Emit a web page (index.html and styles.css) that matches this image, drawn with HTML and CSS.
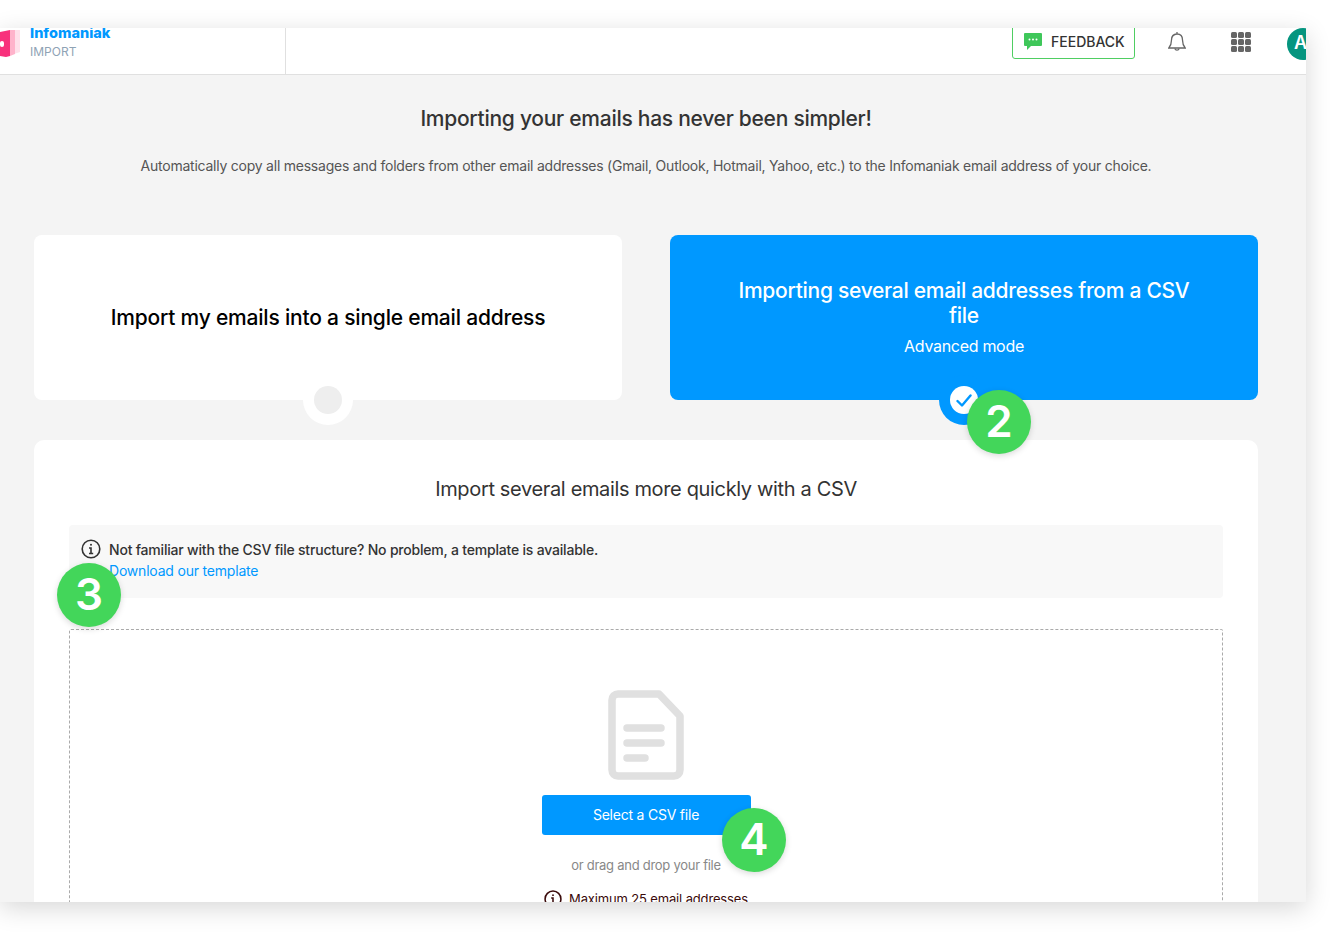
FILE: index.html
```html
<!DOCTYPE html>
<html lang="en">
<head>
    <meta charset="UTF-8">
    <meta name="viewport" content="width=device-width, initial-scale=1.0">
    <title>Import</title>
    <link rel="stylesheet" href="styles.css">
</head>
<body>

    <div class="frame">
        <header class="topbar">
            <div class="brand">
                <svg class="brand-logo" width="20" height="30" viewBox="0 0 20 30">
                    <path d="M0 1h20v22l-6 2V1z" fill="#ffe0ea"/>
                    <path d="M0 1h15v24l-5 2V1z" fill="#ffb3cb"/>
                    <path d="M0 3l10-2v26l-4 1-6-1z" fill="#f8317c"/>
                    <rect x="0" y="12" width="4" height="6" rx="2" fill="#fff"/>
                </svg>
                <div class="brand-text">
                    <div class="brand-name">Infomaniak</div>
                    <div class="brand-sub">IMPORT</div>
                </div>
            </div>
            <div class="topbar-right">
                <button class="feedback">
                    <svg width="18" height="17" viewBox="0 0 18 17">
                        <path d="M1 0h16a1 1 0 0 1 1 1v11a1 1 0 0 1-1 1H7l-4 4v-4H1a1 1 0 0 1-1-1V1a1 1 0 0 1 1-1z" fill="#3fc75a"/>
                        <circle cx="5.5" cy="6.5" r="1" fill="#fff"/>
                        <circle cx="9" cy="6.5" r="1" fill="#fff"/>
                        <circle cx="12.5" cy="6.5" r="1" fill="#fff"/>
                    </svg>
                    FEEDBACK
                </button>
                <svg class="bell" width="18" height="22" viewBox="0 0 18 22" fill="none" stroke="#666" stroke-width="1.3">
                    <path d="M9 1v2M9 3c-3.5 0-5.5 2.6-5.5 6 0 4-1 6-2.700 8h16.400c-1.700-2-2.700-4-2.700-8 0-3.400-2-6-5.500-6z"/>
                    <path d="M6.800 17.500a2.300 2.300 0 0 0 4.400 0"/>
                </svg>
                <div class="apps">
                    <i></i><i></i><i></i><i></i><i></i><i></i><i></i><i></i><i></i>
                </div>
                <div class="avatar">A</div>
            </div>
        </header>

        <main class="content">
            <h1>Importing your emails has never been simpler!</h1>
            <p class="intro">Automatically copy all messages and folders from other email addresses (Gmail, Outlook, Hotmail, Yahoo, etc.) to the Infomaniak email address of your choice.</p>

            <div class="choices">
                <div class="choice">
                    <div class="choice-title">Import my emails into a single email address</div>
                    <span class="radio"><span class="radio-dot"></span></span>
                </div>
                <div class="choice selected">
                    <div class="choice-title">Importing several email addresses from a CSV file</div>
                    <div class="choice-sub">Advanced mode</div>
                    <span class="radio">
                        <span class="radio-dot">
                            <svg width="16" height="13" viewBox="0 0 16 13" fill="none" stroke="#0098ff" stroke-width="2.400" stroke-linecap="round" stroke-linejoin="round"><path d="M1.500 7l4.500 4.500L14.500 1.500"/></svg>
                        </span>
                    </span>
                </div>
            </div>

            <section class="panel">
                <h2>Import several emails more quickly with a CSV</h2>
                <div class="notice">
                    <svg width="20" height="20" viewBox="0 0 20 20" fill="none" stroke="#333" stroke-width="1.600">
                        <circle cx="10" cy="10" r="8.800"/>
                        <path d="M8 9h2v5.500M8 14.500h4.200" />
                        <circle cx="10" cy="5.800" r="1" fill="#333" stroke="none"/>
                    </svg>
                    <div>
                        <div class="notice-text">Not familiar with the CSV file structure? No problem, a template is available.</div>
                        <a class="notice-link" href="#">Download our template</a>
                    </div>
                </div>
                <div class="dropzone">
                    <svg class="file-icon" width="76" height="90" viewBox="0 0 76 90" fill="none">
                        <path d="M10 4h41l21 22v54a6 6 0 0 1-6 6H10a6 6 0 0 1-6-6V10a6 6 0 0 1 6-6z" stroke="#e0e0e0" stroke-width="7.500" stroke-linejoin="round"/>
                        <path d="M19 38h34M19 53h34M19 68h18" stroke="#e0e0e0" stroke-width="7.500" stroke-linecap="round"/>
                    </svg>
                    <button class="select-btn">Select a CSV file</button>
                    <div class="drop-hint">or drag and drop your file</div>
                    <div class="limit">
                        <svg width="18" height="18" viewBox="0 0 20 20" fill="none" stroke="#3a0a0a" stroke-width="1.700">
                            <circle cx="10" cy="10" r="8.800"/>
                            <path d="M8 9h2v5.500M8 14.500h4.200"/>
                            <circle cx="10" cy="5.800" r="1" fill="#3a0a0a" stroke="none"/>
                        </svg>
                        Maximum 25 email addresses
                    </div>
                </div>
            </section>
        </main>

        <span class="step step-2">2</span>
        <span class="step step-3">3</span>
        <span class="step step-4">4</span>
    </div>

</body>
</html>
```

FILE: styles.css
```css
* {
    box-sizing: border-box;
}
body {
    margin: 0;
    padding-top: 28px;
    height: 932px;
    overflow: hidden;
    background-color: white;
    font-family: Inter, "Liberation Sans", sans-serif;
    color: #333;
}
.frame {
    position: relative;
    width: 1306px;
    height: 874px;
    overflow: hidden;
    background-color: #f4f4f4;
    box-shadow: 0px 6px 24px rgba(0, 0, 0, 0.16);
}
.topbar {
    display: flex;
    height: 47px;
    background: white;
    border-bottom: 1px solid #e0e0e0;
}
.brand {
    display: flex;
    width: 286px;
    padding-left: 0;
    border-right: 1px solid #e0e0e0;
}
.brand-logo {
    flex-shrink: 0;
    margin-top: 1px;
}
.brand-text {
    margin-left: 10px;
    margin-top: -5px;
}
.brand-name {
    color: #0098ff;
    font-size: 14.5px;
    font-weight: 800;
    line-height: 20px;
}
.brand-sub {
    margin-top: 1px;
    color: #8fa3b5;
    font-size: 12px;
    line-height: 16px;
}
.topbar-right {
    flex: 1;
    display: flex;
    justify-content: flex-end;
    align-items: flex-start;
}
.feedback {
    display: flex;
    align-items: center;
    gap: 9px;
    width: 123px;
    height: 41px;
    margin-top: -10px;
    padding: 5px 0 0 11px;
    background: white;
    border: 1.5px solid #4fce62;
    border-radius: 3px;
    color: #333;
    font-family: inherit;
    font-size: 14px;
    font-weight: 500;
}
.bell {
    margin: 3px 0 0 33px;
}
.apps {
    display: grid;
    grid-template-columns: repeat(3, 6px);
    gap: 1px;
    margin: 4px 0 0 45px;
}
.apps i {
    height: 6px;
    border-radius: 1.5px;
    background: #666;
}
.avatar {
    flex-shrink: 0;
    width: 32px;
    height: 32px;
    margin: 0 -13px 0 36px;
    padding-left: 7px;
    border-radius: 50%;
    background: #05957f;
    color: white;
    font-size: 18px;
    font-weight: 600;
    line-height: 30px;
}
.content {
    padding: 0 48px 0 34px;
}
h1 {
    margin: 30px 0 0;
    font-size: 21px;
    font-weight: 500;
    letter-spacing: -0.27px;
    line-height: 28px;
    text-align: center;
}
.intro {
    margin: 23px 0 0;
    color: #555;
    font-size: 14px;
    letter-spacing: -0.235px;
    line-height: 20px;
    text-align: center;
}
.choices {
    display: grid;
    grid-template-columns: 1fr 1fr;
    gap: 48px;
    margin-top: 59px;
}
.choice {
    position: relative;
    display: flex;
    flex-direction: column;
    justify-content: center;
    height: 165px;
    padding: 0 60px 1px;
    background: white;
    border-radius: 8px;
    color: black;
    text-align: center;
}
.choice-title {
    font-size: 21px;
    font-weight: 500;
    letter-spacing: -0.2px;
    line-height: 25px;
}
.choice-sub {
    margin-top: 7px;
    font-size: 16px;
    letter-spacing: -0.3px;
    line-height: 22px;
}
.selected {
    padding-bottom: 0;
    background: #0098ff;
    color: white;
}
.selected .choice-title {
    letter-spacing: -0.28px;
}
.radio {
    position: absolute;
    left: 50%;
    bottom: -25px;
    display: flex;
    align-items: center;
    justify-content: center;
    width: 50px;
    height: 50px;
    margin-left: -25px;
    border-radius: 50%;
    background: white;
}
.radio-dot {
    display: flex;
    align-items: center;
    justify-content: center;
    width: 28px;
    height: 28px;
    border-radius: 50%;
    background: #eeeeee;
}
.selected .radio {
    background: #0098ff;
}
.selected .radio-dot {
    background: white;
}
.panel {
    margin-top: 40px;
    padding: 35px 35px 0;
    height: 600px;
    background: white;
    border-radius: 10px;
}
h2 {
    margin: 0;
    font-size: 20px;
    font-weight: 400;
    letter-spacing: -0.35px;
    line-height: 28px;
    text-align: center;
}
.notice {
    display: flex;
    gap: 8px;
    height: 73px;
    margin-top: 22px;
    padding: 14px 12px;
    background: #f8f8f8;
    border-radius: 4px;
    font-size: 14px;
    letter-spacing: -0.2px;
    line-height: 21px;
}
.notice-text {
    font-weight: 500;
}
.notice-link {
    color: #0098ff;
    text-decoration: none;
}
.dropzone {
    display: flex;
    flex-direction: column;
    align-items: center;
    height: 400px;
    margin-top: 31px;
    padding-top: 60px;
    border: 1px dashed #aaa;
    border-radius: 2px;
}
.select-btn {
    width: 209px;
    height: 40px;
    margin-top: 15px;
    padding-bottom: 2px;
    background: #0098ff;
    border: none;
    border-radius: 3px;
    color: white;
    font-family: inherit;
    font-size: 14px;
    letter-spacing: -0.22px;
}
.drop-hint {
    margin-top: 20px;
    color: #888;
    font-size: 13px;
    letter-spacing: -0.27px;
    line-height: 20px;
}
.limit {
    display: flex;
    align-items: center;
    gap: 7px;
    margin-top: 14px;
    color: #3a0a0a;
    font-size: 13px;
    letter-spacing: -0.15px;
    line-height: 20px;
}
.step {
    position: absolute;
    width: 64px;
    height: 64px;
    border-radius: 50%;
    background: #43d65a;
    box-shadow: 0px 2px 6px rgba(0, 0, 0, 0.15);
    color: white;
    font-size: 44px;
    font-weight: 600;
    line-height: 63px;
    text-align: center;
}
.step-2 {
    left: 967px;
    top: 362px;
}
.step-3 {
    left: 57px;
    top: 535px;
}
.step-4 {
    left: 722px;
    top: 780px;
}
```
